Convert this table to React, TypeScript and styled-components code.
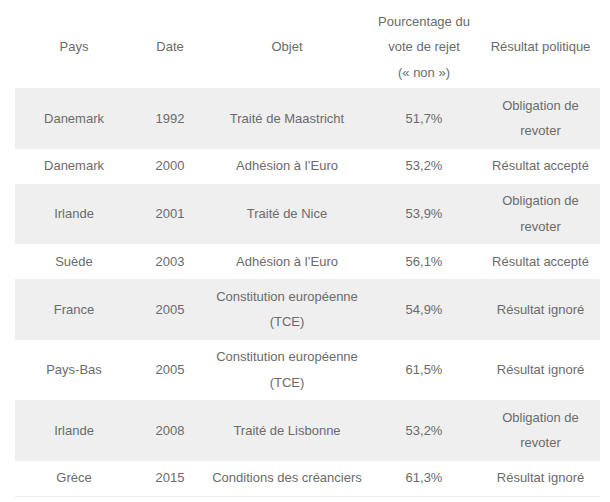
import React from "react";
import styled, { createGlobalStyle } from "styled-components";

const Global = createGlobalStyle`
  html, body { margin: 0; padding: 0; background: #ffffff; }
  body { font-family: "Liberation Sans", Arial, sans-serif; }
`;

const Wrap = styled.div`
  padding-left: 15px;
  width: 585px;
`;

const Table = styled.table`
  width: 585px;
  border-collapse: collapse;
  table-layout: fixed;
  font-family: "Liberation Sans", Arial, sans-serif;
  font-size: 13px;
  color: #6b6b6b;
`;

const HeadCell = styled.th`
  font-weight: normal;
  text-align: center;
  vertical-align: middle;
  line-height: 25.5px;
  padding: 8.5px 5px 3px;
`;

const Row = styled.tr<{ $shaded: boolean; $last: boolean }>`
  background: ${(p) => (p.$shaded ? "#efefef" : "#ffffff")};
  border-bottom: ${(p) => (p.$last ? "1px solid #ececec" : "none")};
`;

const Cell = styled.td`
  text-align: center;
  vertical-align: middle;
  line-height: 25.5px;
  padding: 4.75px 5px;
`;

type Vote = {
  pays: string;
  date: string;
  objet: string;
  pct: string;
  resultat: string;
};

const data: Vote[] = [
  { pays: "Danemark", date: "1992", objet: "Traité de Maastricht", pct: "51,7%", resultat: "Obligation de revoter" },
  { pays: "Danemark", date: "2000", objet: "Adhésion à l’Euro", pct: "53,2%", resultat: "Résultat accepté" },
  { pays: "Irlande", date: "2001", objet: "Traité de Nice", pct: "53,9%", resultat: "Obligation de revoter" },
  { pays: "Suède", date: "2003", objet: "Adhésion à l’Euro", pct: "56,1%", resultat: "Résultat accepté" },
  { pays: "France", date: "2005", objet: "Constitution européenne (TCE)", pct: "54,9%", resultat: "Résultat ignoré" },
  { pays: "Pays-Bas", date: "2005", objet: "Constitution européenne (TCE)", pct: "61,5%", resultat: "Résultat ignoré" },
  { pays: "Irlande", date: "2008", objet: "Traité de Lisbonne", pct: "53,2%", resultat: "Obligation de revoter" },
  { pays: "Grèce", date: "2015", objet: "Conditions des créanciers", pct: "61,3%", resultat: "Résultat ignoré" },
];

export default function App() {
  return (
    <Wrap>
      <Global />
      <Table>
        <colgroup>
          <col style={{ width: 118 }} />
          <col style={{ width: 74 }} />
          <col style={{ width: 160 }} />
          <col style={{ width: 114 }} />
          <col style={{ width: 119 }} />
        </colgroup>
        <thead>
          <tr>
            <HeadCell>Pays</HeadCell>
            <HeadCell>Date</HeadCell>
            <HeadCell>Objet</HeadCell>
            <HeadCell>Pourcentage du vote de rejet («&nbsp;non&nbsp;»)</HeadCell>
            <HeadCell>Résultat politique</HeadCell>
          </tr>
        </thead>
        <tbody>
          {data.map((r, i) => (
            <Row key={i} $shaded={i % 2 === 0} $last={i === data.length - 1}>
              <Cell>{r.pays}</Cell>
              <Cell>{r.date}</Cell>
              <Cell>{r.objet}</Cell>
              <Cell>{r.pct}</Cell>
              <Cell>{r.resultat}</Cell>
            </Row>
          ))}
        </tbody>
      </Table>
    </Wrap>
  );
}
